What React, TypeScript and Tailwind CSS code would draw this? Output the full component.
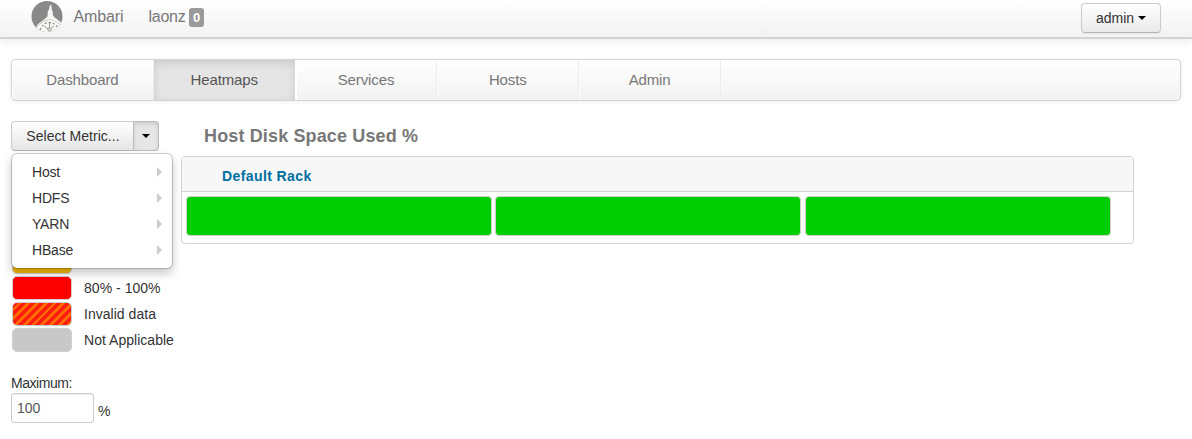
import React from "react";

const metrics = ["Host", "HDFS", "YARN", "HBase"];
const tabs = ["Dashboard", "Heatmaps", "Services", "Hosts", "Admin"];

function Caret() {
  return (
    <svg width="8" height="4" viewBox="0 0 8 4" className="block">
      <path d="M0 0H8L4 4Z" fill="#000" />
    </svg>
  );
}

function Logo() {
  return (
    <svg width="32" height="32" viewBox="0 0 32 32" className="mt-px block">
      <defs>
        <clipPath id="disc">
          <circle cx="16" cy="15.5" r="15.5" />
        </clipPath>
      </defs>
      <g clipPath="url(#disc)">
        <rect width="32" height="32" fill="#898989" />
        <path d="M19 4h1.3l.5 5 1 2v3l1.3 2 8.9 7v9H4v-4l3-5 8-6 1.6-2v-4l1.2-2z" fill="#f7f7f5" />
        <path d="M5 27Q10 20 18.5 18.5Q27 20 32 27" fill="none" stroke="#c4c2bc" strokeWidth="0.8" />
        <path d="M9 29Q12 21.5 18.5 21.5Q26 22 28 30" fill="none" stroke="#858379" strokeWidth="1.2" strokeDasharray="2 2" />
        <path d="M18.5 22v8M13 25l5 4 5-4" fill="none" stroke="#98968e" strokeWidth="1" />
        <circle cx="18.5" cy="28.5" r="1.6" fill="#eeeeea" stroke="#85837b" strokeWidth="0.8" />
      </g>
    </svg>
  );
}

function Legend({ fill, label }: { fill: string; label: string }) {
  return (
    <div className="flex h-[26px] items-center">
      <div className={`h-6 w-[60px] rounded-[5px] border border-[#cfcfcf] ${fill}`} />
      <span className="ml-3 whitespace-nowrap leading-5 tracking-[0.03px]">{label}</span>
    </div>
  );
}

export default function App() {
  return (
    <div className="h-[439px] w-[1192px] overflow-hidden bg-white font-['Liberation_Sans',Arial,sans-serif] text-sm leading-5 text-[#333]">
      <header className="flex h-[39px] items-start border-b-2 border-[#d3d3d3] bg-linear-to-b from-white to-[#f2f2f2] pl-[31px] pr-[31px] shadow-[0_1px_10px_rgba(0,0,0,0.1)]">
        <Logo />
        <span className="ml-[10.5px] mt-[7px] w-[51px] text-base leading-5 tracking-[-0.15px] text-[#777]">Ambari</span>
        <span className="ml-[24px] mt-[7px] w-[38px] text-base leading-5 tracking-[-0.25px] text-[#777]">laonz</span>
        <span className="ml-[2.5px] mt-2 flex h-[19px] w-[15px] items-center justify-center rounded-[3px] bg-[#999] text-[13px] font-bold text-white">0</span>
        <button className="ml-auto mt-[3px] flex h-[30px] w-[80px] items-center justify-center gap-[4px] rounded-[4px] border border-[#ccc] border-b-[#b3b3b3] bg-linear-to-b from-white to-[#e9e9e9] tracking-[-0.05px] shadow-[0_1px_2px_rgba(0,0,0,0.05)]">
          admin <Caret />
        </button>
      </header>

      <nav className="ml-[11px] mt-5 flex h-[42px] w-[1170px] overflow-hidden rounded-[4px] border border-[#d4d4d4] bg-linear-to-b from-white to-[#f2f2f2] text-[15px] text-[#777] shadow-[0_1px_4px_rgba(0,0,0,0.065)]">
        {tabs.map((tab) => (
          <div
            key={tab}
            className={`flex w-[141.8px] items-center justify-center border-r tracking-[-0.12px] ${
              tab === "Heatmaps"
                ? "border-white bg-[#e5e5e5] text-[#555] shadow-[inset_0_3px_8px_rgba(0,0,0,0.125)]"
                : "border-[#ececec] shadow-[inset_1px_0_0_#fff]"
            }`}
          >
            {tab}
          </div>
        ))}
      </nav>

      <main className="flex pl-[11px] pt-5">
        <aside className="relative w-[170px]">
          <div className="flex h-[30px]">
            <button className="w-[123px] rounded-l-[4px] border border-r-[#bbb] border-[#ccc] border-b-[#b3b3b3] bg-linear-to-b from-white to-[#e6e6e6] pl-px tracking-[0.05px]">
              Select Metric...
            </button>
            <button className="flex w-[25px] items-center justify-center rounded-r-[4px] border border-l-0 border-[#bbb] bg-[#e6e6e6] shadow-[inset_0_2px_4px_rgba(0,0,0,0.12)]">
              <Caret />
            </button>
          </div>

          <ul className="absolute left-0 top-[32px] z-10 w-[162px] rounded-[6px] border border-black/20 bg-white bg-clip-padding pb-[5px] pt-[5px] shadow-[0_5px_10px_rgba(0,0,0,0.2)]">
            {metrics.map((metric) => (
              <li key={metric} className="flex h-[26px] items-center justify-between pl-5 pr-[10px] tracking-[-0.2px]">
                {metric}
                <svg width="5" height="10" viewBox="0 0 5 10">
                  <path d="M0 0L5 5L0 10Z" fill="#ccc" />
                </svg>
              </li>
            ))}
          </ul>

          <div className="pl-px pt-[98px]">
            <Legend fill="bg-[#f2b600]" label="60% - 80%" />
            <Legend fill="bg-[#ff0000]" label="80% - 100%" />
            <Legend
              fill="bg-[repeating-linear-gradient(135deg,#ff1e10_0px,#ff1e10_3.54px,#ff6c00_3.54px,#ff6c00_6.2px)]"
              label="Invalid data"
            />
            <Legend fill="bg-[#c8c8c8]" label="Not Applicable" />
          </div>

          <label className="mt-5 block leading-5 tracking-[-0.45px]">Maximum:</label>
          <div className="flex">
            <input
              readOnly
              value="100"
              className="h-[30px] w-[83px] rounded-[3px] border border-[#ccc] px-[5px] text-[#555] shadow-[inset_0_1px_1px_rgba(0,0,0,0.075)]"
            />
            <span className="ml-1 mt-2">%</span>
          </div>
        </aside>

        <section>
          <h4 className="ml-[23px] mt-[5px] text-[18px] font-bold leading-5 tracking-[0.14px] text-[#777]">Host Disk Space Used %</h4>
          <div className="mt-[10px] h-[88px] w-[953px] overflow-hidden rounded-[4px] border border-[#d3d3d3]">
            <div className="h-[35px] border-b border-[#d3d3d3] bg-[#f7f7f7] pl-10 pt-[9px] font-bold tracking-[0.4px] text-[#006f9f]">Default Rack</div>
            <div className="flex gap-[3.4px] pl-1 pt-1">
              <div className="h-10 w-[306px] rounded-[4px] border border-[#cfcfcf] bg-[#00ce00]" />
              <div className="h-10 w-[306px] rounded-[4px] border border-[#cfcfcf] bg-[#00ce00]" />
              <div className="h-10 w-[306px] rounded-[4px] border border-[#cfcfcf] bg-[#00ce00]" />
            </div>
          </div>
        </section>
      </main>
    </div>
  );
}
